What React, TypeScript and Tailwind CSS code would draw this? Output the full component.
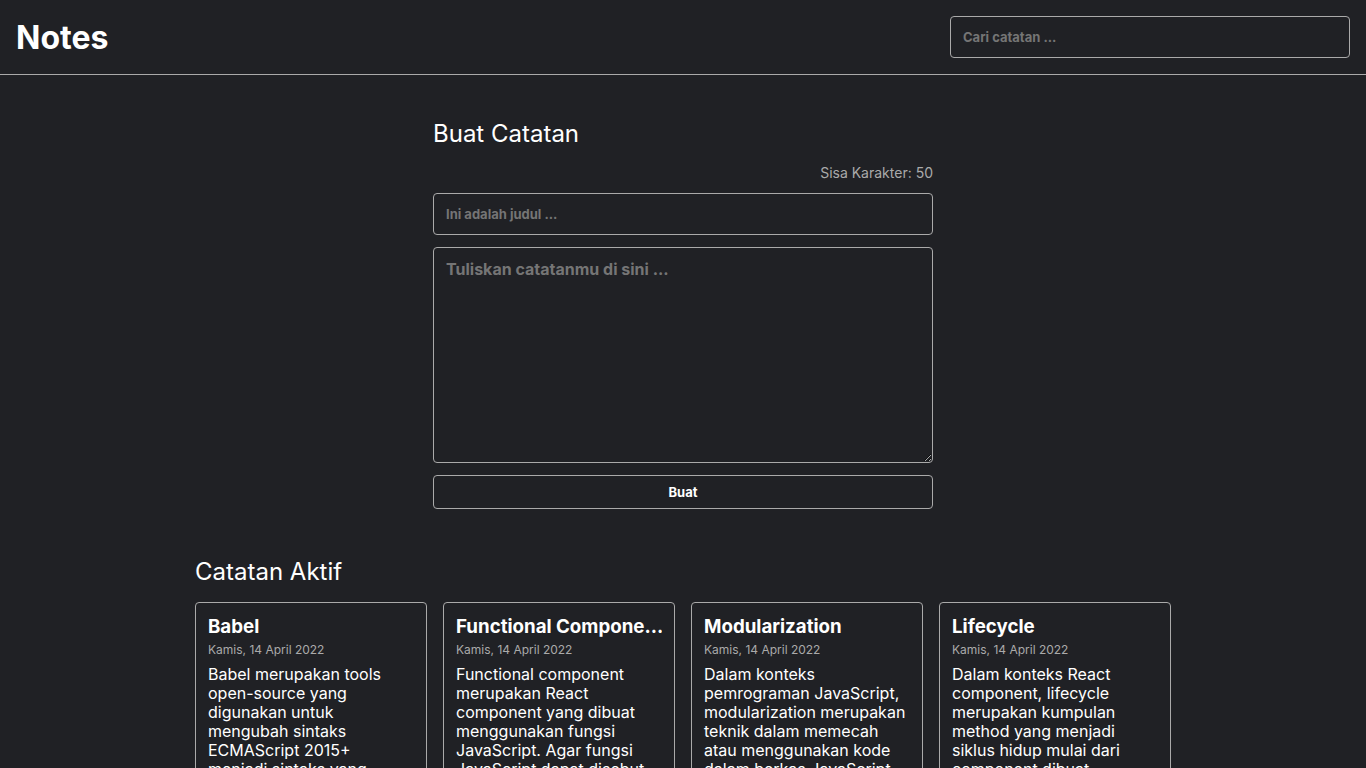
import React from "react";

const notes = [
  {
    title: "Babel",
    date: "Kamis, 14 April 2022",
    body: "Babel merupakan tools open-source yang digunakan untuk mengubah sintaks ECMAScript 2015+ menjadi sintaks yang didukung oleh JavaScript engine versi lama. Babel sering dipakai ketika kita menggunakan sintaks terbaru termasuk sintaks JSX.",
  },
  {
    title: "Functional Component",
    date: "Kamis, 14 April 2022",
    body: "Functional component merupakan React component yang dibuat menggunakan fungsi JavaScript. Agar fungsi JavaScript dapat disebut component ataupun functional component, fungsi tersebut harus mengembalikan React element dan dipanggil layaknya React component.",
  },
  {
    title: "Modularization",
    date: "Kamis, 14 April 2022",
    body: "Dalam konteks pemrograman JavaScript, modularization merupakan teknik dalam memecah atau menggunakan kode dalam berkas JavaScript secara terpisah berdasarkan tanggung jawabnya masing-masing.",
  },
  {
    title: "Lifecycle",
    date: "Kamis, 14 April 2022",
    body: "Dalam konteks React component, lifecycle merupakan kumpulan method yang menjadi siklus hidup mulai dari component dibuat (constructor), dicetak (render), pasca-cetak (componentDidMount), dan sebagainya.",
  },
  {
    title: "ESM",
    date: "Kamis, 14 April 2022",
    body: "ESM (ECMAScript Module) merupakan format modularisasi standar JavaScript.",
  },
  {
    title: "Module Bundler",
    date: "Kamis, 14 April 2022",
    body: "Dalam konteks pemrograman JavaScript, module bundler merupakan tools yang digunakan untuk menggabungkan seluruh modul JavaScript yang digunakan oleh aplikasi menjadi satu berkas.",
  },
];

function shorten(t: string, max = 18) {
  return t.length > max ? t.slice(0, max) + "…" : t;
}

export default function App() {
  return (
    <div
      className="min-h-screen bg-[#202125] text-white"
      style={{ fontFamily: "Inter, 'Noto Sans', sans-serif" }}
    >
      <header className="h-[75px] flex items-center justify-between px-4 border-b border-[#aaaaaa]">
        <h1 className="text-[32px] font-bold leading-[39px] text-white">Notes</h1>
        <input
          type="text"
          placeholder="Cari catatan ..."
          className="w-[400px] h-[42px] px-3 bg-transparent border border-[#aaaaaa] rounded-[4px] text-[13px] font-bold text-white placeholder:text-[#757575] outline-none"
        />
      </header>

      <main className="max-w-[1000px] mx-auto mt-4 p-3">
        <section className="max-w-[500px] mx-auto">
          <h2 className="mt-4 mb-4 text-[24px] leading-[29px] font-normal">Buat Catatan</h2>
          <p className="text-right text-[14px] leading-[17px] text-[#aaaaaa]">Sisa Karakter: 50</p>
          <input
            type="text"
            placeholder="Ini adalah judul ..."
            className="block w-full mt-3 h-[42px] px-3 bg-transparent border border-[#aaaaaa] rounded-[4px] text-[13px] font-bold text-white placeholder:text-[#757575] outline-none"
          />
          <textarea
            placeholder="Tuliskan catatanmu di sini ..."
            className="block w-full mt-3 h-[216px] p-3 bg-transparent border border-[#aaaaaa] rounded-[4px] text-[16px] leading-[19px] font-bold text-white placeholder:text-[#757575] outline-none"
          />
          <button className="block w-full mt-3 h-[34px] pt-[1px] bg-transparent border border-[#aaaaaa] rounded-[4px] text-[13px] font-bold text-white">
            Buat
          </button>
        </section>

        <h2 className="mt-12 mb-4 text-[24px] leading-[29px] font-normal">Catatan Aktif</h2>
        <div className="grid grid-cols-4 gap-4 mb-12">
          {notes.map((n) => (
            <div key={n.title} className="border border-[#aaaaaa] rounded-[4px] p-3">
              <h3 title={n.title} className="text-[18.72px] leading-[23px] font-bold whitespace-nowrap overflow-hidden">
                {shorten(n.title)}
              </h3>
              <p className="mt-1 text-[12px] leading-[15px] text-[#aaaaaa]">{n.date}</p>
              <p className="mt-2 text-[16px] leading-[19px]">{n.body}</p>
            </div>
          ))}
        </div>
      </main>
    </div>
  );
}
